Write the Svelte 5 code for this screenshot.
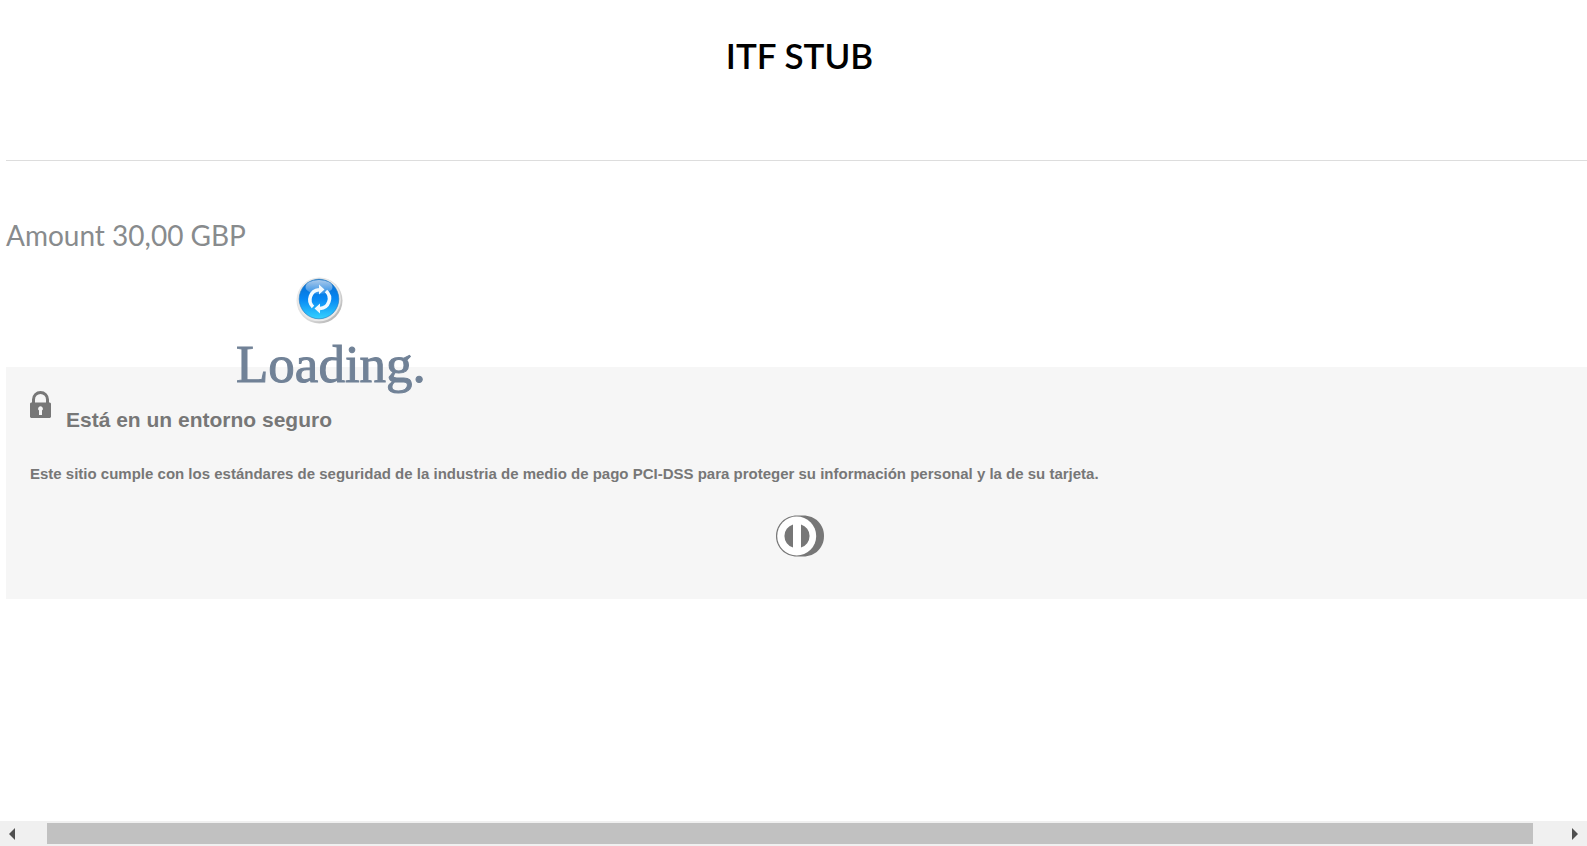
<script>
  const amount = '30,00';
  const currency = 'GBP';
</script>

<div class="page">
  <main>
    <header><h1>ITF STUB</h1></header>

    <section class="payment">
      <h2>Amount {amount} {currency}</h2>
      <div class="loader" role="status">
        <svg class="spinner" width="50" height="50" viewBox="0 0 50 50" aria-hidden="true">
          <defs>
            <linearGradient id="ball" x1="0" y1="0" x2="0" y2="1">
              <stop offset="0" stop-color="#0867c8" />
              <stop offset="0.5" stop-color="#0788f4" />
              <stop offset="1" stop-color="#35d2ff" />
            </linearGradient>
            <linearGradient id="shine" x1="0" y1="0" x2="0" y2="1">
              <stop offset="0" stop-color="#fff" stop-opacity="0.65" />
              <stop offset="1" stop-color="#fff" stop-opacity="0.15" />
            </linearGradient>
            <linearGradient id="rim" x1="0" y1="0" x2="1" y2="1">
              <stop offset="0" stop-color="#f0f0f0" />
              <stop offset="0.6" stop-color="#d8d8d8" />
              <stop offset="1" stop-color="#a8a8a8" />
            </linearGradient>
          </defs>
          <circle cx="24.500" cy="25.500" r="23" fill="url(#rim)" />
          <circle cx="24" cy="24.500" r="21.800" fill="#e9e9e9" />
          <circle cx="24" cy="24" r="19.800" fill="url(#ball)" stroke="#1474bd" stroke-width="0.600" />
          <ellipse cx="24" cy="12" rx="13.500" ry="7" fill="url(#shine)" />
          <g fill="none" stroke="#f2faff" stroke-width="3.600">
            <path d="M18 32A10 10 0 0 1 24 14.800" />
            <path d="M31 16A10 10 0 0 1 25 33.500" />
          </g>
          <path d="M24 9.500L29.500 14.500L24 19.500ZM25 28.500L19.500 33.500L25 38.500Z" fill="#f2faff" />
        </svg>
        <span>Loading.</span>
      </div>
    </section>

    <section class="secure">
      <div class="secure-title">
        <svg width="21" height="27" viewBox="0 0 21 27" aria-hidden="true">
          <path d="M3.500 13V8.500a7 7 0 0 1 14 0V13" fill="none" stroke="#777" stroke-width="3" />
          <path fill-rule="evenodd" fill="#777" d="M1 11.500H20L21 12.500V26L20 27H1L0 26V12.500ZM10.500 15.300a2.400 2.400 0 0 0-1.500 4.300V24h3v-4.400a2.400 2.400 0 0 0-1.500-4.300Z" />
        </svg>
        <h3>Está en un entorno seguro</h3>
      </div>
      <p>Este sitio cumple con los estándares de seguridad de la industria de medio de pago PCI-DSS para proteger su información personal y la de su tarjeta.</p>
      <div class="brands">
        <svg width="48" height="42" viewBox="0 0 48 42" role="img" aria-label="Diners Club">
          <path d="M21 0.500H27C39.500 0.500 48 9.500 48 21S39.500 41.500 27 41.500H21C9 41.500 0 32.500 0 21S9 0.500 21 0.500Z" fill="#777" />
          <circle cx="20.700" cy="21" r="19.500" fill="#fff" />
          <path d="M17 9.500a12 12 0 0 0 0 23ZM25 9.500a12 12 0 0 1 0 23Z" fill="#777" />
        </svg>
      </div>
    </section>
  </main>

  <div class="scrollbar">
    <button type="button" aria-label="Scroll left">
      <svg width="6" height="12" viewBox="0 0 6 12"><path d="M6 0V12L0 6Z" fill="#505050" /></svg>
    </button>
    <div class="track"><div class="thumb"></div></div>
    <button type="button" aria-label="Scroll right">
      <svg width="6" height="12" viewBox="0 0 6 12"><path d="M0 0V12L6 6Z" fill="#505050" /></svg>
    </button>
  </div>
</div>

<style>
  :global(body) {
    margin: 0;
    background: #fff;
  }
  .page {
    display: flex;
    flex-direction: column;
    min-height: 100vh;
    font-family: "Liberation Sans", Arial, sans-serif;
  }
  main {
    flex: 1;
    padding-left: 6px;
  }
  h1, h2, h3, p {
    margin: 0;
  }
  header {
    padding: 31px 0 81px;
    border-bottom: 1px solid #ddd;
    text-align: center;
  }
  h1 {
    padding-left: 6px;
    color: #000;
    font: 600 35px/48px Lato, "Open Sans", sans-serif;
  }
  .payment {
    position: relative;
    padding: 54px 0 112px;
  }
  h2 {
    color: #888b8d;
    font: 400 28px/40px Lato, "Open Sans", sans-serif;
  }
  .loader {
    position: absolute;
    top: 114px;
    left: 230px;
    display: flex;
    flex-direction: column;
    gap: 9px;
    color: #718297;
    font: 53px/60px "Liberation Serif", "Times New Roman", serif;
    -webkit-text-stroke: 1px #718297;
  }
  .spinner {
    margin-left: 59px;
  }
  .secure {
    padding: 24px;
    background: #f6f6f6;
    color: #777;
  }
  .secure-title {
    display: flex;
    gap: 15px;
  }
  h3 {
    padding-top: 16px;
    font-size: 21px;
    line-height: 26px;
  }
  p {
    padding-top: 31px;
    font-size: 15px;
    font-weight: 700;
    line-height: 20px;
  }
  .brands {
    display: flex;
    justify-content: center;
    padding: 31px 0 18px 6px;
  }
  .scrollbar {
    display: flex;
    height: 25px;
    background: #f0f0f0;
  }
  button {
    display: grid;
    place-items: center;
    width: 24px;
    padding: 0;
    border: 0;
    background: none;
  }
  .track {
    flex: 1;
    padding: 2px 30px 2px 23px;
  }
  .thumb {
    height: 21px;
    background: #c1c1c1;
  }
</style>
